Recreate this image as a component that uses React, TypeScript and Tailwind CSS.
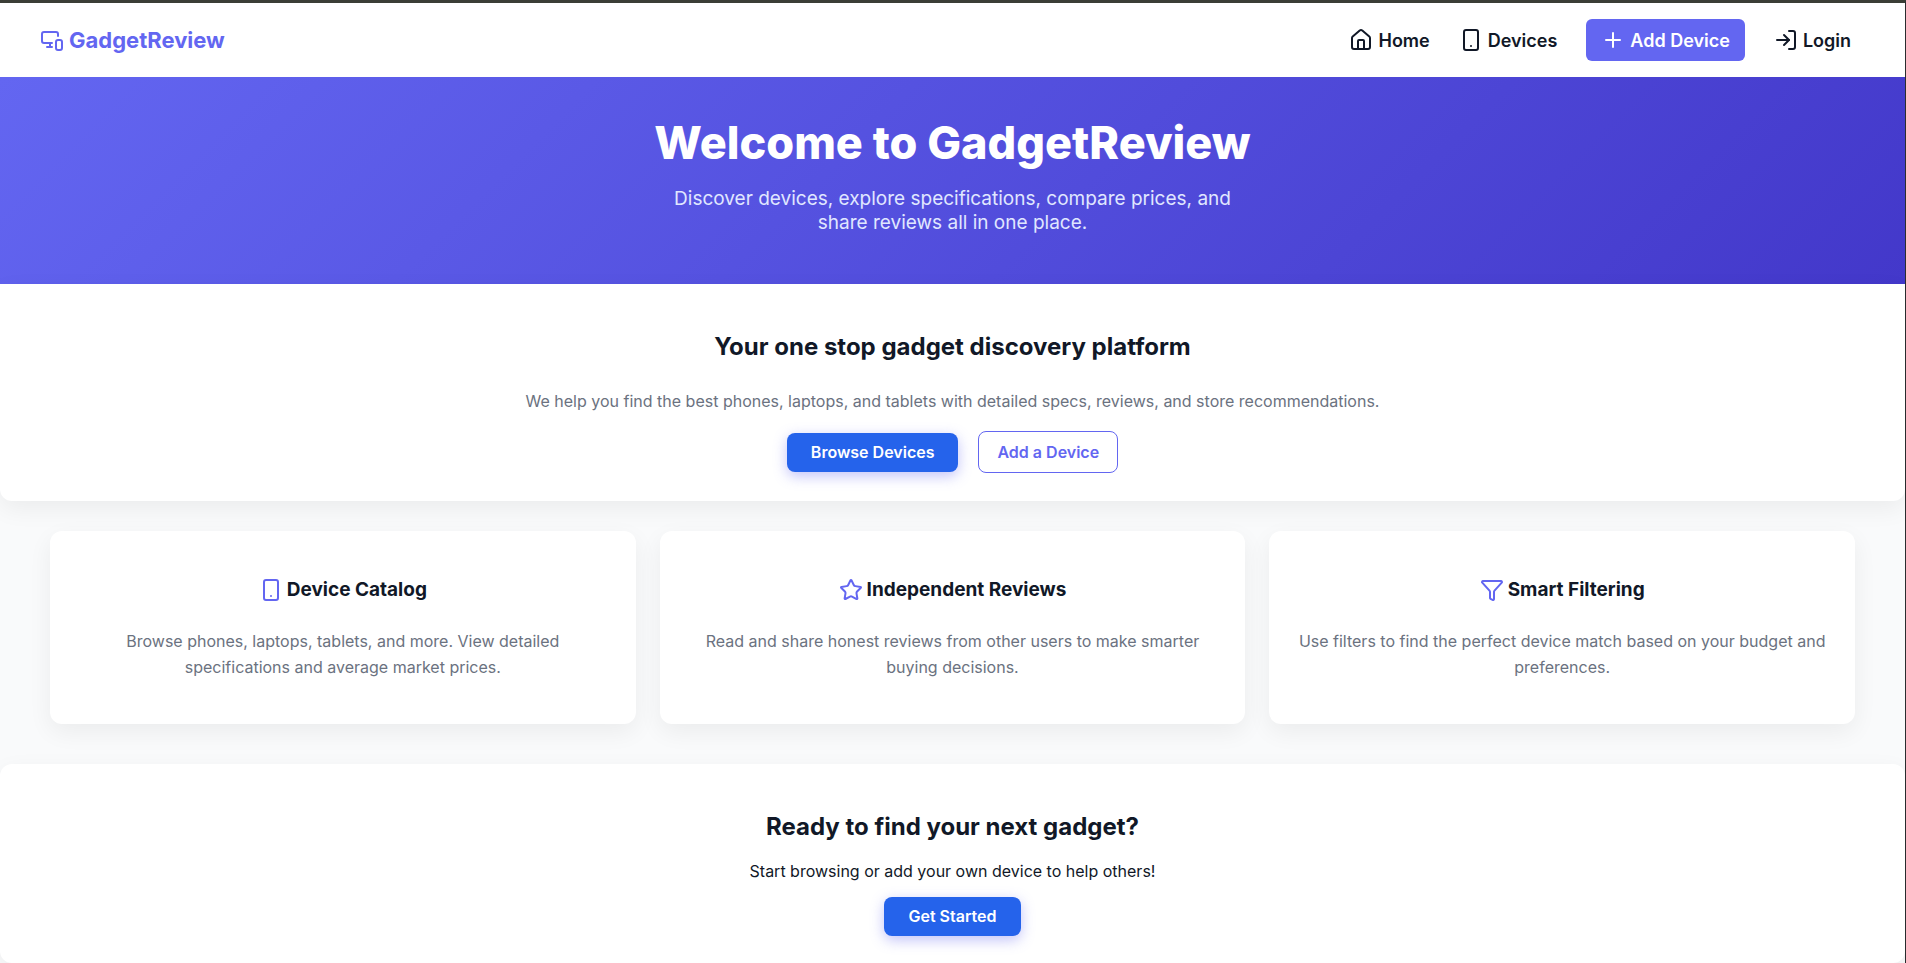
import { Funnel, House, LogIn, MonitorSmartphone, Plus, Smartphone, Star } from "lucide-react";
import type { LucideIcon } from "lucide-react";

const features: { icon: LucideIcon; title: string; text: string }[] = [
  {
    icon: Smartphone,
    title: "Device Catalog",
    text: "Browse phones, laptops, tablets, and more. View detailed specifications and average market prices.",
  },
  {
    icon: Star,
    title: "Independent Reviews",
    text: "Read and share honest reviews from other users to make smarter buying decisions.",
  },
  {
    icon: Funnel,
    title: "Smart Filtering",
    text: "Use filters to find the perfect device match based on your budget and preferences.",
  },
];

const primaryButton =
  "rounded-lg bg-[#2563eb] px-6 py-2 leading-[23px] font-semibold text-white shadow-[0_4px_14px_rgba(99,102,241,0.4)]";

function Header() {
  return (
    <header className="flex items-center justify-between bg-white px-10 py-4">
      <a href="#" className="flex items-center gap-[5px] text-[22px] leading-7 font-bold text-[#6366f1]">
        <MonitorSmartphone size={24} />
        GadgetReview
      </a>
      <nav className="flex items-center gap-[29px] pr-[14px] text-lg leading-[22px] font-semibold">
        <a href="#" className="flex items-end gap-[5px]">
          <House size={24} />
          Home
        </a>
        <a href="#" className="flex items-end gap-[5px]">
          <Smartphone size={24} />
          Devices
        </a>
        <a href="#" className="flex items-end gap-[5px] rounded-md bg-[#6366f1] px-[15px] py-[9px] text-white">
          <Plus size={24} />
          Add Device
        </a>
        <a href="#" className="flex items-end gap-[5px]">
          <LogIn size={24} />
          Login
        </a>
      </nav>
    </header>
  );
}

export default function App() {
  return (
    <div className="min-h-screen border-t-3 border-r border-t-[#3b3e36] border-r-[#2b2d2f] bg-[#f9fafb] font-['Inter',sans-serif] text-[#111827]">
      <Header />
      <main>
        <section className="bg-[linear-gradient(135deg,#6366f1,#4338ca)] px-5 pt-9 pb-[49px] text-center text-white">
          <h1 className="text-[45px] leading-[60px] font-extrabold">Welcome to GadgetReview</h1>
          <p className="mx-auto mt-[14px] max-w-[600px] text-[19px] leading-6 text-[#e0e7ff]">
            Discover devices, explore specifications, compare prices, and share reviews all in one place.
          </p>
        </section>

        <section className="relative rounded-b-xl bg-white px-8 pt-12 pb-7 text-center shadow-[0_8px_24px_rgba(0,0,0,0.06)]">
          <h2 className="text-2xl leading-[30px] font-bold">Your one stop gadget discovery platform</h2>
          <p className="mt-[26px] leading-[26px] text-[#6b7280]">
            We help you find the best phones, laptops, and tablets with detailed specs, reviews, and store
            recommendations.
          </p>
          <div className="mt-[17px] flex items-baseline justify-center gap-5">
            <button type="button" className={primaryButton}>
              Browse Devices
            </button>
            <button
              type="button"
              className="rounded-lg border border-[#6366f1] bg-white px-[18px] py-2 leading-6 font-semibold text-[#6366f1]"
            >
              Add a Device
            </button>
          </div>
        </section>

        <section className="grid grid-cols-3 gap-6 px-[50px] pt-[30px] pb-10">
          {features.map(({ icon: Icon, title, text }) => (
            <article
              key={title}
              className="rounded-xl bg-white px-7 pt-[46px] pb-11 text-center shadow-[0_8px_24px_rgba(0,0,0,0.06)]"
            >
              <h3 className="flex items-center justify-center gap-1 text-[19px] leading-[26px] font-bold">
                <Icon size={24} className="text-[#6366f1]" />
                {title}
              </h3>
              <p className="mt-[25px] leading-[26px] text-[#6b7280]">{text}</p>
            </article>
          ))}
        </section>

        <section className="rounded-xl bg-white px-8 pt-12 pb-[27px] text-center shadow-[0_8px_24px_rgba(0,0,0,0.06)]">
          <h2 className="text-2xl leading-[30px] font-bold">Ready to find your next gadget?</h2>
          <p className="mt-[17px] leading-6">Start browsing or add your own device to help others!</p>
          <button type="button" className={`${primaryButton} mt-[14px]`}>
            Get Started
          </button>
        </section>
      </main>
    </div>
  );
}
